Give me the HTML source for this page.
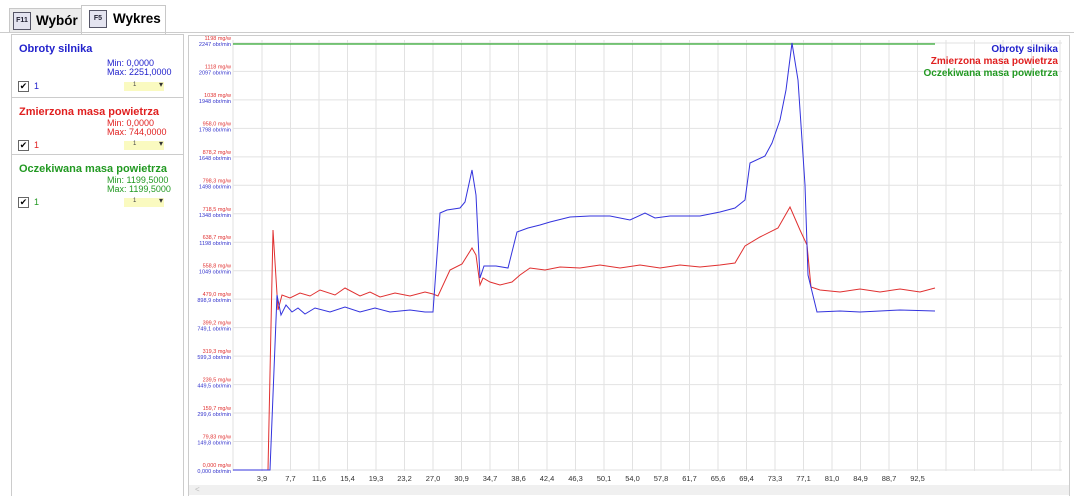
<!DOCTYPE html>
<html><head><meta charset="utf-8"><style>
body{margin:0;width:1074px;height:495px;background:#fff;font-family:"Liberation Sans",sans-serif;position:relative;overflow:hidden}
.tab{position:absolute;top:5px;height:26px;border:1px solid #c8c8c8;border-bottom:none;background:#ececec;font-weight:bold;font-size:13.5px;overflow:hidden;white-space:nowrap}
.key{position:absolute;top:4px;width:16px;height:16px;border:1px solid #556;background:#e4e4f0;font-size:7px;line-height:16px;text-align:center;color:#223;font-weight:bold}
.lp{position:absolute;left:11px;top:34px;width:171px;height:461px;border:1px solid #ccc;border-bottom:none}
.sec{position:absolute;left:0;width:171px;border-bottom:1px solid #ccc;font-size:9px}
.h{position:absolute;left:7px;top:8px;font-weight:bold;font-size:11px}
.mm{position:absolute;left:95px;line-height:9px}
.cb{position:absolute;left:6px;top:46px;width:9px;height:9px;border:1px solid #666;background:#fff;font-size:9px;line-height:9px;text-align:center;color:#000}
.one{position:absolute;left:22px;top:46px}
.dd{position:absolute;left:112px;top:47px;width:40px;height:9px;background:#fafac0}
.dd:after{content:"▾";position:absolute;right:1px;top:-2px;font-size:8px;color:#333}
.dd:before{content:"1";position:absolute;left:9px;top:0;font-size:6px;color:#444}
</style></head><body>
<div class="tab" style="left:9px;width:71px;top:8px;height:23px"><div class="key" style="left:3px;top:3px">F11</div><span style="position:absolute;left:26px;top:4px">Wybór</span></div>
<div class="tab" style="left:81px;width:83px;background:#fff;height:28px"><div class="key" style="left:7px">F5</div><span style="position:absolute;left:31px;top:5px">Wykres</span></div>
<div style="position:absolute;left:0;top:32px;width:1074px;border-top:1px solid #ccc"></div>
<div class="lp">
<div class="sec" style="top:0;height:62px;color:#2222cc"><div class="h">Obroty silnika</div><div class="mm" style="top:24px">Min: 0,0000<br>Max: 2251,0000</div><div class="cb">✔</div><div class="one">1</div><div class="dd"></div></div>
<div class="sec" style="top:63px;height:56px;color:#e02020"><div class="h">Zmierzona masa powietrza</div><div class="mm" style="top:21px">Min: 0,0000<br>Max: 744,0000</div><div class="cb" style="top:42px">✔</div><div class="one" style="top:42px">1</div><div class="dd" style="top:43px"></div></div>
<div class="sec" style="top:120px;height:60px;border:none;color:#229922"><div class="h">Oczekiwana masa powietrza</div><div class="mm" style="top:21px">Min: 1199,5000<br>Max: 1199,5000</div><div class="cb" style="top:42px">✔</div><div class="one" style="top:42px">1</div><div class="dd" style="top:43px"></div></div>
</div>
<div style="position:absolute;left:188px;top:35px;width:880px;height:460px;border:1px solid #ccc;border-bottom:none"></div>
<div style="position:absolute;left:189px;top:485px;width:880px;height:10px;background:#f0f0f0;font-size:8px;color:#bbb;padding-left:6px;box-sizing:border-box">&lt;</div>
<svg style="position:absolute;left:0;top:0" width="1074" height="495">
<g stroke="#e2e2e2" stroke-width="1" fill="none" id="g"></g>
<g id="lab" font-family="Liberation Sans" font-size="5.5" text-anchor="end"></g>
<g id="xl" font-family="Liberation Sans" font-size="7.5" text-anchor="middle" fill="#333"></g>
<line x1="233" y1="44" x2="935" y2="44" stroke="#33aa33" stroke-width="1.3"/>
<polyline fill="none" stroke="#e03030" stroke-width="1" points="233,470 268,470 273,230 278,310 282,295 290,298 300,293 310,296 320,290 335,295 345,288 360,296 370,292 380,297 395,293 410,296 425,292 433,294 438,296 450,270 462,264 472,248 476,255 480,285 483,278 490,282 500,285 512,282 520,275 530,268 545,270 560,267 580,268 600,265 620,268 640,265 660,268 680,265 700,267 720,265 735,263 745,246 760,237 778,228 790,207 800,230 807,245 811,287 820,290 840,292 860,289 880,292 900,289 920,292 935,288"/>
<polyline fill="none" stroke="#3333dd" stroke-width="1" points="233,470 270,470 277,295 281,315 286,305 292,312 298,308 305,314 315,308 330,312 345,307 360,312 375,308 390,312 410,310 425,312 433,312 440,213 447,210 460,208 465,202 472,170 476,195 480,278 484,266 496,266 508,268 517,232 528,228 540,225 550,222 570,217 590,216 610,216 630,220 645,213 655,218 670,216 700,216 720,212 735,208 745,200 750,163 765,156 772,143 780,120 786,90 792,43 798,80 805,185 808,275 817,312 840,311 860,312 880,311 900,310 935,311"/>
<text x="1058" y="52" font-family="Liberation Sans" font-size="10" font-weight="bold" fill="#2222cc" text-anchor="end">Obroty silnika</text>
<text x="1058" y="64" font-family="Liberation Sans" font-size="10" font-weight="bold" fill="#e02020" text-anchor="end">Zmierzona masa powietrza</text>
<text x="1058" y="76" font-family="Liberation Sans" font-size="10" font-weight="bold" fill="#229922" text-anchor="end">Oczekiwana masa powietrza</text>
</svg>
<script>
var ns="http://www.w3.org/2000/svg",g=document.getElementById("g"),lab=document.getElementById("lab"),xl=document.getElementById("xl");
function el(p,t,a,txt){var e=document.createElementNS(ns,t);for(var k in a)e.setAttribute(k,a[k]);if(txt)e.textContent=txt;p.appendChild(e);}
el(g,"line",{x1:233,y1:40,x2:233,y2:471});
for(var x=262;x<1062;x+=28.5)el(g,"line",{x1:x,y1:40,x2:x,y2:471});
for(var i=0;i<=15;i++){var y=470-i*28.47;el(g,"line",{x1:233,y1:y,x2:1062,y2:y});}
var r=["0,000 mg/w","79,83 mg/w","159,7 mg/w","239,5 mg/w","319,3 mg/w","399,2 mg/w","479,0 mg/w","558,8 mg/w","638,7 mg/w","718,5 mg/w","798,3 mg/w","878,2 mg/w","958,0 mg/w","1038 mg/w","1118 mg/w","1198 mg/w"];
var b=["0,000 obr/min","149,8 obr/min","299,6 obr/min","449,5 obr/min","599,3 obr/min","749,1 obr/min","898,9 obr/min","1049 obr/min","1198 obr/min","1348 obr/min","1498 obr/min","1648 obr/min","1798 obr/min","1948 obr/min","2097 obr/min","2247 obr/min"];
for(var i=0;i<16;i++){var y=470-i*28.47;el(lab,"text",{x:231,y:y-3,fill:"#e03030"},r[i]);el(lab,"text",{x:231,y:y+3,fill:"#3333cc"},b[i]);}
var xs=["3,9","7,7","11,6","15,4","19,3","23,2","27,0","30,9","34,7","38,6","42,4","46,3","50,1","54,0","57,8","61,7","65,6","69,4","73,3","77,1","81,0","84,9","88,7","92,5"];
for(var i=0;i<xs.length;i++)el(xl,"text",{x:262+i*28.5,y:481},xs[i]);
</script>
</body></html>
